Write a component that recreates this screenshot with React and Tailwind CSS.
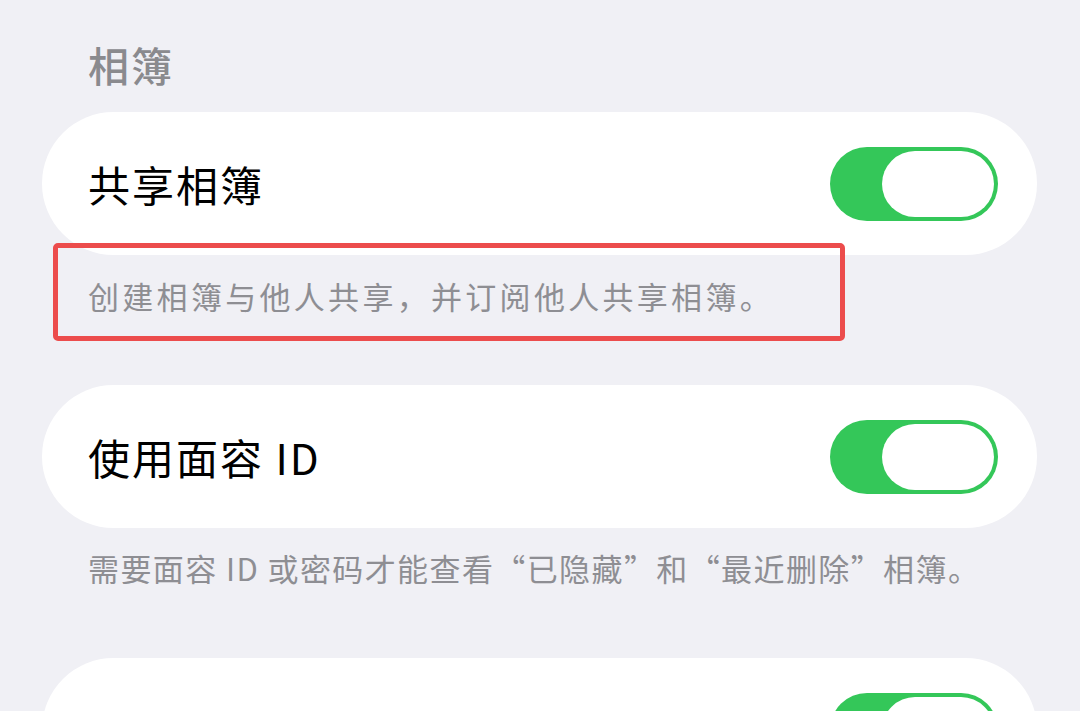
import React from "react";

const font = { fontFamily: '"Noto Sans CJK SC", "Noto Sans", sans-serif' };

const Toggle = () => (
  <div className="w-[168px] h-[74px] rounded-full bg-[#34c759] p-[4px] flex justify-end">
    <div className="w-[112px] h-[66px] rounded-full bg-white" />
  </div>
);

const Row = ({ label }) => (
  <div className="mx-[42px] mr-[43px] h-[143px] bg-white rounded-[72px] flex items-center justify-between pl-[46px] pr-[39px]">
    <span className="text-[42px] tracking-[2px] text-black">{label}</span>
    <Toggle />
  </div>
);

export default function App() {
  return (
    <div className="w-[1080px] h-[711px] overflow-hidden bg-[#f0f0f5] relative" style={font}>
      {/* section header */}
      <div className="pl-[88px] pt-[34px] h-[112px]">
        <span className="text-[41px] font-medium text-[#8a8a8e] tracking-[2px]">相簿</span>
      </div>

      <Row label="共享相簿" />
      <div className="h-[130px] pl-[88px] pt-[18px]">
        <span className="text-[31px] tracking-[3.3px] text-[#8e8e93]">
          创建相簿与他人共享，并订阅他人共享相簿。
        </span>
      </div>

      <Row label="使用面容 ID" />
      <div className="h-[130px] pl-[88px] pt-[17px]">
        <span className="text-[31px] tracking-[1.4px] text-[#8e8e93]">
          需要面容 ID 或密码才能查看“已隐藏”和“最近删除”相簿。
        </span>
      </div>

      <Row label="显示“已隐藏”相簿" />

      {/* annotation box */}
      <div className="absolute left-[53px] top-[243px] w-[792px] h-[98px] border-[5px] border-[#ec4c4c] rounded-[5px]" />
    </div>
  );
}
